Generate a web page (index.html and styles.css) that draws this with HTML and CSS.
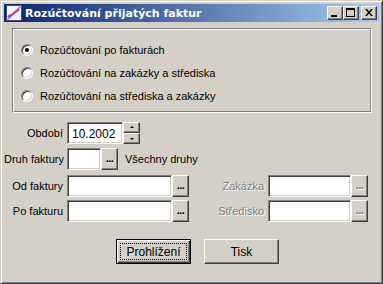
FILE: index.html
```html
<!DOCTYPE html>
<html>
<head>
<meta charset="utf-8">
<link rel="stylesheet" href="styles.css">
</head>
<body>
<div class="window">
  <div class="titlebar">
    <svg class="appicon" width="16" height="16" viewBox="0 0 16 16">
      <rect x="0.5" y="0.5" width="15" height="15" fill="#f4f4f8" stroke="#3a4a8a"/>
      <path d="M1 15 L15 1" stroke="#9aa0d0" stroke-width="2"/>
      <path d="M2 12 C4 9 6 11 8 8 C10 6 11 7 13 4" stroke="#d0308a" stroke-width="2" fill="none"/>
      <path d="M3 13 L6 10" stroke="#6060c0" stroke-width="1"/>
    </svg>
    <span class="title">Rozúčtování přijatých faktur</span>
    <div class="tbtns">
      <div class="tbtn"><span class="g-min"></span></div>
      <div class="tbtn"><span class="g-max"></span></div>
      <div class="tbtn close"><svg width="8" height="7" viewBox="0 0 8 7"><path d="M0 0h2l2 2.5L6 0h2L5 3.5 8 7H6L4 4.5 2 7H0l3-3.5z" fill="#000"/></svg></div>
    </div>
  </div>
  <div class="client">
    <div class="group">
      <label class="radio"><span class="rb checked"></span>Rozúčtování po fakturách</label>
      <label class="radio"><span class="rb"></span>Rozúčtování na zakázky a střediska</label>
      <label class="radio"><span class="rb"></span>Rozúčtování na střediska a zakázky</label>
    </div>
    <div class="row r-obdobi">
      <span class="lbl">Období</span>
      <div class="edit e-obdobi">10.2002</div>
      <div class="spin"><div class="sb"><i class="up"></i></div><div class="sb"><i class="down"></i></div></div>
    </div>
    <div class="row r-druh">
      <span class="lbl">Druh faktury</span>
      <div class="edit e-druh"></div>
      <div class="btn dots">...</div>
      <span class="note">Všechny druhy</span>
    </div>
    <div class="row r-od">
      <span class="lbl">Od faktury</span>
      <div class="edit e-long"></div>
      <div class="btn dots">...</div>
      <span class="lbl2 disabled">Zakázka</span>
      <div class="edit e-right"></div>
      <div class="btn dots disabled">...</div>
    </div>
    <div class="row r-po">
      <span class="lbl">Po fakturu</span>
      <div class="edit e-long"></div>
      <div class="btn dots">...</div>
      <span class="lbl2 disabled">Středisko</span>
      <div class="edit e-right"></div>
      <div class="btn dots disabled">...</div>
    </div>
    <div class="actions">
      <div class="btn big default"><span class="focus">Prohlížení</span></div>
      <div class="btn big">Tisk</div>
    </div>
  </div>
</div>
</body>
</html>
```

FILE: styles.css
```css
html, body {
  margin: 0;
  padding: 0;
  background: #d4d0c8;
}
body {
  font-family: "Liberation Sans", Arial, sans-serif;
  font-size: 11px;
  color: #000;
}
.window {
  width: 383px;
  height: 284px;
  box-sizing: border-box;
  border: 1px solid;
  border-color: #d4d0c8 #404040 #404040 #d4d0c8;
  background: #d4d0c8;
  box-shadow: inset 1px 1px 0 #fff, inset -1px -1px 0 #808080;
  padding: 3px;
}
.titlebar {
  height: 18px;
  background: linear-gradient(to right, #0a246a, #a6caf0);
  display: flex;
  align-items: center;
  padding-left: 2px;
}
.appicon { flex: none; }
.title {
  color: #fff;
  font-family: "DejaVu Sans", Verdana, sans-serif;
  font-weight: bold;
  font-size: 11px;
  margin-left: 3px;
}
.tbtns {
  margin-left: auto;
  margin-right: 2px;
  display: flex;
}
.tbtn {
  width: 16px;
  height: 14px;
  box-sizing: border-box;
  background: #d4d0c8;
  border: 1px solid;
  border-color: #fff #404040 #404040 #fff;
  box-shadow: inset -1px -1px 0 #808080;
  position: relative;
}
.tbtn.close { margin-left: 2px; }
.g-min {
  position: absolute;
  left: 3px; top: 8px;
  width: 6px; height: 2px;
  background: #000;
}
.g-max {
  position: absolute;
  left: 2px; top: 1px;
  width: 9px; height: 9px;
  box-sizing: border-box;
  border: 1px solid #000;
  border-top-width: 2px;
}
.tbtn.close svg {
  position: absolute;
  left: 3px; top: 2px;
}
.client {
  padding: 6px 8px 0 8px;
}
.group {
  height: 85px;
  box-sizing: border-box;
  border: 1px solid;
  border-color: #808080 #fff #fff #808080;
  box-shadow: inset 1px 1px 0 #fff, inset -1px -1px 0 #808080;
  width: 360px;
  padding-top: 9px;
  padding-left: 8px;
}
.radio {
  display: flex;
  align-items: center;
  height: 23px;
}
.rb {
  width: 12px;
  height: 12px;
  box-sizing: border-box;
  border-radius: 50%;
  background: #fff;
  border: 1px solid;
  border-color: #808080 #fff #fff #808080;
  box-shadow: inset 1px 1px 0 #404040, inset -1px -1px 0 #d4d0c8;
  margin-right: 7px;
  position: relative;
  flex: none;
}
.rb.checked::after {
  content: "";
  position: absolute;
  left: 3px; top: 3px;
  width: 4px; height: 4px;
  border-radius: 50%;
  background: #000;
}
.row {
  display: flex;
  align-items: center;
  margin-left: -8px;
}
.r-obdobi { margin-top: 9px; height: 22px; }
.r-druh { margin-top: 4px; height: 22px; }
.r-od { margin-top: 5px; height: 22px; }
.r-po { margin-top: 3px; height: 22px; }
.lbl {
  width: 59px;
  text-align: right;
  margin-right: 4px;
  white-space: nowrap;
}
.lbl2 {
  width: 75px;
  text-align: right;
  margin-right: 4px;
}
.edit {
  height: 22px;
  box-sizing: border-box;
  background: #fff;
  border: 1px solid;
  border-color: #808080 #fff #fff #808080;
  box-shadow: inset 1px 1px 0 #404040, inset -1px -1px 0 #d4d0c8;
  padding: 4px 0 0 4px;
  font-size: 12px;
}
.e-obdobi { width: 56px; }
.e-druh { width: 34px; }
.e-long { width: 105px; }
.e-right { width: 83px; }
.spin {
  width: 17px;
  height: 22px;
  display: flex;
  flex-direction: column;
}
.sb {
  flex: 1;
  background: #d4d0c8;
  box-sizing: border-box;
  border: 1px solid;
  border-color: #fff #404040 #404040 #fff;
  box-shadow: inset -1px -1px 0 #808080;
  position: relative;
}
.sb i {
  position: absolute;
  left: 6px;
  width: 0; height: 0;
  border-left: 2px solid transparent;
  border-right: 2px solid transparent;
}
.sb i.up { top: 3px; border-bottom: 2px solid #000; }
.sb i.down { top: 4px; border-top: 2px solid #000; }
.btn {
  box-sizing: border-box;
  background: #d4d0c8;
  border: 1px solid;
  border-color: #fff #404040 #404040 #fff;
  box-shadow: inset -1px -1px 0 #808080;
  display: flex;
  align-items: center;
  justify-content: center;
}
.dots {
  width: 17px;
  height: 22px;
  font-weight: bold;
  font-size: 11px;
  padding-bottom: 2px;
  letter-spacing: -0.5px;
}
.note { margin-left: 7px; }
.disabled {
  color: #808080;
  text-shadow: 1px 1px 0 #fff;
}
.actions {
  display: flex;
  margin-top: 17px;
  padding-left: 104px;
  gap: 13px;
}
.big {
  width: 75px;
  height: 25px;
  font-size: 12px;
}
.big.default {
  border: 1px solid #000;
  box-shadow: inset 1px 1px 0 #fff, inset -1px -1px 0 #404040, inset -2px -2px 0 #808080;
}
.focus {
  border: 1px dotted #000;
  width: 67px;
  height: 17px;
  box-sizing: border-box;
  display: flex;
  align-items: center;
  justify-content: center;
}
```
